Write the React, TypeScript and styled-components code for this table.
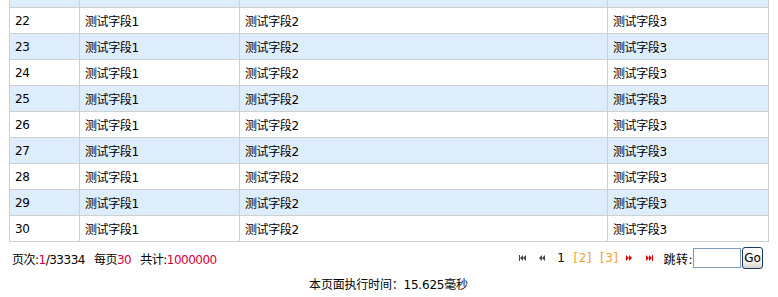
import React from "react";
import styled, { createGlobalStyle } from "styled-components";

const GlobalStyle = createGlobalStyle`
  body {
    margin: 0;
    background: #fff;
    font-family: Tahoma, "DejaVu Sans", "Noto Sans CJK SC", sans-serif;
    font-size: 12px;
    color: #000;
  }
`;

const Page = styled.div`
  width: 778px;
  padding: 0 10px 0 9px;
  box-sizing: border-box;
`;

const Grid = styled.table`
  width: 759px;
  margin-top: -1px;
  border-collapse: collapse;
  table-layout: fixed;
`;

const Row = styled.tr<{ $alt: boolean }>`
  background: ${(p) => (p.$alt ? "#deedfc" : "#fff")};
`;

const Cell = styled.td<{ $h?: number }>`
  height: ${(p) => p.$h ?? 25}px;
  padding: 0 0 0 5px;
  border: 1px solid #cfcfcf;
  font-family: "DejaVu Sans", "Noto Sans CJK SC", sans-serif;
  font-size: 12px;
  letter-spacing: -0.4px;
  white-space: nowrap;
  vertical-align: middle;
`;

const Footer = styled.div`
  display: flex;
  align-items: center;
  justify-content: space-between;
  height: 22px;
  margin-top: 5px;
  padding: 0 5px 0 3px;
`;

const Stats = styled.div`
  font-family: "DejaVu Sans", "Noto Sans CJK SC", sans-serif;
  letter-spacing: -0.5px;
  display: flex;
  gap: 9px;
`;

const Red = styled.span`
  color: #d8003a;
`;

const Pager = styled.div`
  display: flex;
  align-items: center;
  font-family: "DejaVu Sans", "Noto Sans CJK SC", sans-serif;
`;

const Arrow = styled.span<{ $gap?: number }>`
  display: inline-flex;
  align-items: center;
  margin-right: ${(p) => p.$gap ?? 11}px;
`;

const PageNum = styled.span<{ $current?: boolean }>`
  color: ${(p) => (p.$current ? "#000" : "#f0a030")};
  margin-right: 8px;
  letter-spacing: 0.5px;
`;

const JumpLabel = styled.span`
  margin-left: 8px;
  letter-spacing: 0.5px;
`;

const JumpInput = styled.input`
  width: 48px;
  height: 20px;
  box-sizing: border-box;
  border: 1px solid #7f9db9;
  padding: 0 2px;
  margin: 0;
`;

const GoButton = styled.button`
  width: 21px;
  height: 22px;
  margin-left: 1px;
  padding: 0;
  border: 1px solid #1c3a5c;
  border-radius: 3px;
  background: linear-gradient(#ffffff, #ecebe6 80%, #d6d0c5);
  font-family: "DejaVu Sans", sans-serif;
  font-size: 12px;
  color: #000;
`;

const Timing = styled.div`
  margin-top: 6px;
  text-align: center;
  font-family: "DejaVu Sans", "Noto Sans CJK SC", sans-serif;
  letter-spacing: -0.2px;
`;

type Dir = "first" | "prev" | "next" | "last";

function PagerIcon({ dir, color }: { dir: Dir; color: string }) {
  const left = dir === "first" || dir === "prev";
  const bar = dir === "first" || dir === "last";
  return (
    <svg width="9" height="6" viewBox="0 0 9 6">
      {left ? (
        <g fill={color}>
          {bar && <rect x="0" y="0" width="1" height="6" />}
          <polygon points={`${bar ? 1 : 0},3 ${bar ? 4 : 3},0 ${bar ? 4 : 3},6`} />
          <polygon points={`${bar ? 4 : 3},3 ${bar ? 7 : 6},0 ${bar ? 7 : 6},6`} />
        </g>
      ) : (
        <g fill={color}>
          <polygon points="0,0 3,3 0,6" />
          <polygon points="3,0 6,3 3,6" />
          {bar && <rect x="6" y="0" width="1" height="6" />}
        </g>
      )}
    </svg>
  );
}

const rows = [22, 23, 24, 25, 26, 27, 28, 29, 30];

export default function App() {
  return (
    <Page>
      <GlobalStyle />
      <Grid>
        <colgroup>
          <col style={{ width: 70 }} />
          <col style={{ width: 160 }} />
          <col style={{ width: 368 }} />
          <col style={{ width: 161 }} />
        </colgroup>
        <tbody>
          {/* tail of the row scrolled above the view */}
          <Row $alt>
            <Cell $h={7} />
            <Cell $h={7} />
            <Cell $h={7} />
            <Cell $h={7} />
          </Row>
          {rows.map((n) => (
            <Row key={n} $alt={n % 2 === 1}>
              <Cell>{n}</Cell>
              <Cell>测试字段1</Cell>
              <Cell>测试字段2</Cell>
              <Cell>测试字段3</Cell>
            </Row>
          ))}
        </tbody>
      </Grid>
      <Footer>
        <Stats>
          <span>
            页次:<Red>1</Red>/33334
          </span>
          <span>
            每页<Red>30</Red>
          </span>
          <span>
            共计:<Red>1000000</Red>
          </span>
        </Stats>
        <Pager>
          <Arrow>
            <PagerIcon dir="first" color="#444" />
          </Arrow>
          <Arrow $gap={9}>
            <PagerIcon dir="prev" color="#444" />
          </Arrow>
          <PageNum $current>1</PageNum>
          <PageNum>[2]</PageNum>
          <PageNum>[3]</PageNum>
          <Arrow $gap={11}>
            <PagerIcon dir="next" color="#e00" />
          </Arrow>
          <Arrow $gap={0}>
            <PagerIcon dir="last" color="#e00" />
          </Arrow>
          <JumpLabel>跳转:</JumpLabel>
          <JumpInput type="text" />
          <GoButton>Go</GoButton>
        </Pager>
      </Footer>
      <Timing>本页面执行时间：15.625毫秒</Timing>
    </Page>
  );
}
